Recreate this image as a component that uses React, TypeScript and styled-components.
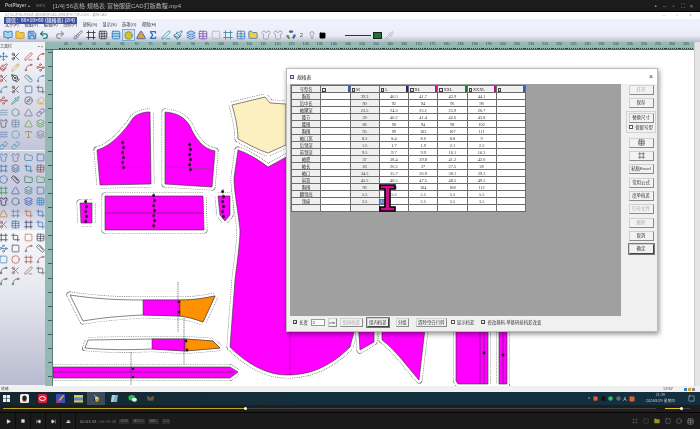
import styled, { createGlobalStyle } from "styled-components";
import {
  BookOpen, Brush, Circle, Compass, Crop, Eraser, Folder, Frame, Grid3x3, Hexagon, Layers, Lightbulb, Link,
  Move, Paintbrush, PenLine, PenTool, Pencil, Pipette, Play, Redo2, Ruler, Save, Scissors, Shirt, Sigma,
  SkipBack, SkipForward, Spline, Square, Table, Triangle, Type, Undo2, Waypoints, Waves,
} from "lucide-react";

const CJK = `"Liberation Sans", "Noto Sans CJK SC", sans-serif`;

const Global = createGlobalStyle`
  html, body { margin: 0; padding: 0; background: #111; }
  * { box-sizing: border-box; }
`;

const Root = styled.div`
  position: relative;
  width: 700px;
  height: 429px;
  overflow: hidden;
  display: flex;
  flex-direction: column;
  font-family: ${CJK};
  background: #1a1a1a;
  filter: blur(0.3px);
`;

/* player title */
const PlayerTitle = styled.div`
  height: 12px;
  background: #1b1b1b;
  border-bottom: 1px solid #000;
  color: #b5b5b5;
  display: flex;
  align-items: center;
  padding: 0 5px;
  font-size: 6px;
  white-space: nowrap;
`;
const PlayerName = styled.span`
  font-size: 4.6px;
  font-weight: 700;
  width: 31px;
`;
const PlayerType = styled.span`
  font-size: 4.4px;
  color: #777;
  width: 17px;
`;
const PlayerCtl = styled.div`
  margin-left: auto;
  display: flex;
  gap: 4px;
  align-items: center;
  font-size: 6px;
  color: #999;
  padding-right: 1px;
  & > span { width: 5px; text-align: center; line-height: 6px; }
`;

/* cad window */
const AppWindow = styled.div`
  height: 380px;
  background: #fff;
  display: flex;
  flex-direction: column;
  position: relative;
`;
const AppTitle = styled.div`
  height: 7px;
  padding: 0 5px;
  font-size: 3.6px;
  line-height: 6px;
  color: #aaa;
  display: flex;
  justify-content: space-between;
  white-space: nowrap;
`;
const WinBtns = styled.div`
  display: flex;
  gap: 11px;
  padding-right: 3px;
  font-size: 5px;
  color: #bbb;
`;
const Caption = styled.div`
  position: absolute;
  left: 4px;
  top: 5px;
  background: #3d4fa0;
  color: #cfd6fa;
  font-size: 5px;
  line-height: 6.5px;
  font-weight: 700;
  padding: 0 2px;
  white-space: nowrap;
`;
const MenuBar = styled.div`
  height: 9px;
  background: #eef0fb;
  display: flex;
  gap: 5.5px;
  padding: 3px 0 0 5px;
  font-size: 4.2px;
  line-height: 6px;
  color: #333;
`;
const ToolBar = styled.div`
  height: 14px;
  background: linear-gradient(#eef0fb 0%, #e8eaf6 55%, #b9bccb 100%);
  display: flex;
  align-items: center;
  padding-left: 2px;
`;
const Slot = styled.div<{ $w?: number; $active?: boolean }>`
  width: ${(p) => p.$w ?? 12.5}px;
  height: 12px;
  flex: none;
  display: flex;
  align-items: center;
  justify-content: center;
  font-size: 6px;
  color: #555;
  border: ${(p) => (p.$active ? "1px solid #7fa8d8" : "none")};
  background: ${(p) => (p.$active ? "#cfe2f8" : "transparent")};
`;
const LineSample = styled.div`
  width: 26px;
  height: 1px;
  background: #333;
  margin: 0 1px;
  flex: none;
`;
const GreenBox = styled.div`
  width: 9px;
  height: 7px;
  flex: none;
  background: #127a2a;
  border: 1px solid #222;
`;

const Workspace = styled.div`
  height: 344px;
  display: flex;
`;

/* tool panel */
const ToolPanel = styled.div`
  width: 45px;
  flex: none;
  padding-top: 1px;
  display: flex;
  flex-direction: column;
  background: #f2f3f8;
  overflow: hidden;
`;
const PanelHead = styled.div`
  height: 7px;
  font-size: 4px;
  line-height: 7px;
  color: #333;
  display: flex;
  justify-content: space-between;
  padding: 0 2px 0 0;
`;
const ToolSection = styled.div<{ $tone: string; $h: number }>`
  height: ${(p) => p.$h}px;
  background: ${(p) => p.$tone};
  padding-top: 1px;
  margin-bottom: 1px;
`;
const ToolGrid = styled.div`
  margin-left: -3px;
  display: grid;
  grid-template-columns: repeat(4, 12.5px);
  grid-auto-rows: 11.1px;
  justify-items: center;
  align-items: center;
  opacity: 0.85;
`;

/* rulers and canvas */
const Main = styled.div`
  flex: 1;
  min-width: 0;
  display: flex;
  flex-direction: column;
`;
const HRuler = styled.div`
  height: 8px;
  background: #93b9b2;
  display: flex;
  padding-left: 14px;
  overflow: hidden;
  border-bottom: 1px solid #666;
`;
const HMark = styled.div`
  width: 14.1px;
  flex: none;
  font-size: 3.6px;
  line-height: 5px;
  color: #274440;
  text-align: center;
  border-bottom: 1px dotted #27443f;
`;
const CanvasRow = styled.div`
  flex: 1;
  display: flex;
  min-height: 0;
`;
const VRuler = styled.div`
  width: 8px;
  flex: none;
  background: #93b9b2;
  border-right: 1px solid #5f7f7a;
  display: flex;
  flex-direction: column;
  overflow: hidden;
  padding-top: 2px;
`;
const VMark = styled.div`
  height: 14.1px;
  flex: none;
  border-top: 1px solid #3f5f5a;
  width: 5px;
  margin-left: 3px;
`;
const Canvas = styled.svg`
  display: block;
  flex: 1;
  width: 641px;
  height: 336px;
  background: #fff;
`;
const ScrollStrip = styled.div`
  width: 6px;
  flex: none;
  background: #e4e4e4;
  border-left: 1px solid #ccc;
`;
const StatusBar = styled.div`
  height: 6px;
  background: #f0f0f0;
  font-size: 3.8px;
  line-height: 6px;
  color: #444;
  display: flex;
  align-items: center;
  padding: 0 5px 0 1px;
`;
const StatusCount = styled.span`
  margin-left: auto;
  margin-right: 10px;
`;
const StatusDot = styled.i<{ $c: string }>`
  width: 3px;
  height: 3px;
  margin-left: 1px;
  background: ${(p) => p.$c};
`;

/* dialog */
const Dialog = styled.div`
  position: absolute;
  left: 286px;
  top: 68px;
  width: 372px;
  height: 264px;
  background: #f0f0f0;
  box-shadow: 1px 2px 5px rgba(0, 0, 0, 0.45);
  border: 1px solid #bbb;
  display: flex;
  flex-direction: column;
  font-size: 4.4px;
  color: #222;
`;
const DialogHead = styled.div`
  height: 15px;
  flex: none;
  background: #fff;
  display: flex;
  align-items: center;
  padding: 0 4px 0 3px;
  gap: 3px;
  font-size: 4.8px;
`;
const DialogIcon = styled.div`
  width: 4px;
  height: 4px;
  border: 1px solid #557;
  background: #cde;
`;
const DialogClose = styled.span`
  margin-left: auto;
  font-size: 7px;
  color: #333;
`;
const DialogBody = styled.div`
  display: flex;
  flex: 1;
  min-height: 0;
`;
const GridArea = styled.div`
  margin-left: 3px;
  width: 331px;
  height: 232px;
  flex: none;
  background: #a0a0a0;
  padding: 1px 0 0 1px;
`;
const SizeTable = styled.table`
  border-collapse: collapse;
  width: 235px;
  table-layout: fixed;
  background: #fff;
  font-family: "Liberation Serif", "Noto Sans CJK SC", serif;
  font-size: 4.3px;
  color: #333;
  td {
    border: 1px solid #6c6c6c;
    height: 7px;
    padding: 0;
    text-align: center;
    line-height: 5px;
    overflow: hidden;
    white-space: nowrap;
  }
`;
const NameCell = styled.td`
  background: #efefef;
`;
const BaseCell = styled.td`
  background: #efefef;
`;
const HeadCell = styled.td`
  background: #f0f0f0;
  position: relative;
  text-align: left !important;
  padding-left: 1px !important;
`;
const Swatch = styled.i<{ $c: string }>`
  position: absolute;
  right: 0;
  top: 0;
  bottom: 0;
  width: 2px;
  background: ${(p) => p.$c};
`;
const HeadBox = styled.b`
  display: inline-block;
  width: 3.5px;
  height: 3.5px;
  border: 0.6px solid #444;
  background: #fff;
  margin-right: 1px;
  vertical-align: -0.5px;
  font-size: 3px;
  line-height: 2.5px;
  font-weight: 400;
  &::after { content: "✓"; }
`;
const PickedCell = styled.td`
  text-align: left !important;
`;
const Picked = styled.span`
  background: #3a82d0;
  color: #fff;
  padding: 0 0.5px;
`;
const SideCol = styled.div`
  flex: 1;
  padding: 1px 6px 0 5px;
  display: flex;
  flex-direction: column;
  align-items: center;
  gap: 3.3px;
`;
const DlgButton = styled.div<{ $off?: boolean; $def?: boolean; $w?: number }>`
  width: ${(p) => p.$w ?? 25}px;
  height: 10px;
  flex: none;
  background: #f2f2f2;
  border: 1px solid #d0d0d0;
  border-right-color: ${(p) => (p.$def ? "#444" : "#8a8a8a")};
  border-bottom-color: ${(p) => (p.$def ? "#444" : "#8a8a8a")};
  outline: ${(p) => (p.$def ? "0.5px solid #777" : "none")};
  color: ${(p) => (p.$off ? "#aaa" : "#333")};
  font-size: 4.4px;
  line-height: 8px;
  text-align: center;
  white-space: nowrap;
  overflow: hidden;
`;
const GroupBox = styled.div`
  width: 30px;
  height: 22px;
  flex: none;
  border: 1px solid #d2d2d2;
  margin: -1px 0 2px;
  padding-top: 1px;
  display: flex;
  flex-direction: column;
  align-items: center;
  gap: 1px;
`;
const CheckRow = styled.label<{ $ml?: number }>`
  display: flex;
  align-items: center;
  gap: 2px;
  margin-left: ${(p) => p.$ml ?? 0}px;
  white-space: nowrap;
  color: #333;
  font-size: 4.4px;
`;
const Tick = styled.span<{ $on?: boolean }>`
  width: 4px;
  height: 4px;
  flex: none;
  background: #fff;
  border: 0.7px solid #555;
  font-size: 4px;
  line-height: 3px;
  text-align: center;
  color: #111;
  &::after { content: "${(p) => (p.$on ? "✓" : "")}"; }
`;
const FootRow = styled.div`
  height: 16px;
  flex: none;
  display: flex;
  align-items: center;
  padding: 0 0 2px 6px;
`;
const LenBox = styled.div`
  width: 14px;
  height: 7px;
  background: #fff;
  border: 0.7px solid #999;
  margin: 0 3px;
  font-size: 4px;
  line-height: 6px;
  padding-left: 1px;
`;
const FootBtn = styled(DlgButton)<{ $mr: number }>`
  height: 9px;
  line-height: 7px;
  margin-right: ${(p) => p.$mr}px;
`;

/* I beam pointer */
const Beam = styled.svg`
  position: absolute;
  left: 379px;
  top: 184px;
  width: 17px;
  height: 28px;
`;

/* taskbar and player */
const TaskBar = styled.div`
  height: 13px;
  background: linear-gradient(90deg, #15262f, #14303d 45%, #143040);
  display: flex;
  align-items: center;
`;
const TaskSlot = styled.div<{ $on?: boolean }>`
  width: 18px;
  height: 13px;
  flex: none;
  display: flex;
  align-items: center;
  justify-content: center;
  background: ${(p) => (p.$on ? "#3c4c58" : "transparent")};
`;
const StartSlot = styled(TaskSlot)`
  width: 12px;
  margin-right: 3px;
`;
const Tray = styled.div`
  margin-left: auto;
  display: flex;
  align-items: center;
  gap: 2.5px;
  padding-right: 5px;
  color: #ccd;
  font-size: 5px;
`;
const Clock = styled.div`
  width: 40px;
  margin: 0 5px 0 3px;
  text-align: center;
  font-size: 3.8px;
  line-height: 5.6px;
  color: #b8c4cc;
  white-space: nowrap;
`;
const SeekRow = styled.div`
  height: 8px;
  background: #1d1d1d;
  border-bottom: 1px solid #050505;
  display: flex;
  align-items: center;
  padding: 0 5px 0 3px;
`;
const SeekTrack = styled.div`
  width: 653px;
  height: 1px;
  background: #444;
  position: relative;
`;
const SeekFill = styled.div`
  height: 1px;
  background: #c0a820;
`;
const Knob = styled.div<{ $left: number }>`
  position: absolute;
  left: ${(p) => p.$left}px;
  top: -1px;
  width: 3px;
  height: 3px;
  background: #fff;
  border-radius: 50%;
`;
const VolTrack = styled.div`
  margin-left: 9px;
  width: 25px;
  height: 1px;
  background: #444;
  position: relative;
`;
const VolFill = styled.div`
  width: 16px;
  height: 1px;
  background: #d8c030;
`;
const Controls = styled.div`
  flex: 1;
  background: #1a1a1a;
  display: flex;
  align-items: center;
  color: #ddd;
  padding-left: 1px;
`;
const PlayBtn = styled.div`
  width: 15px;
  height: 16px;
  border-right: 1px solid #0c0c0c;
  flex: none;
  display: flex;
  align-items: center;
  justify-content: center;
  font-size: 5px;
`;
const TimeText = styled.span`
  font-size: 4.2px;
  color: #999;
  margin-left: 4px;
  white-space: nowrap;
  & > em { color: #666; font-style: normal; }
`;
const Chip = styled.span`
  background: #2c2c2c;
  color: #777;
  font-size: 3.8px;
  line-height: 5px;
  padding: 0 1.5px;
  margin-left: 3px;
`;
const RightCtl = styled.div`
  margin-left: auto;
  display: flex;
  gap: 5px;
  padding-right: 6px;
  align-items: center;
`;

type Ico = typeof Ruler;

const sec1: [Ico, string][] = [
  [Move, "#2a6fb0"], [Scissors, "#333"], [PenLine, "#c0392b"], [Spline, "#b03030"],
  [Paintbrush, "#b02020"], [Pencil, "#c8a020"], [Spline, "#a04040"], [Waypoints, "#b04020"],
  [Scissors, "#c03030"], [PenTool, "#222"], [Ruler, "#4a7a90"], [Spline, "#3a7fa8"],
  [Spline, "#3a8a98"], [Scissors, "#444"], [Square, "#3a6fb0"], [Crop, "#556"],
  [Waypoints, "#c04040"], [Pipette, "#3a7a7a"], [Compass, "#556"], [Eraser, "#d0a020"],
  [Waves, "#4a8aa8"], [Hexagon, "#5a7a98"], [Triangle, "#668"], [Link, "#557"],
  [Shirt, "#557"], [Table, "#6a8aa8"], [Triangle, "#6a9a50"], [Layers, "#5a9a50"],
  [Waves, "#3a6fb0"], [Circle, "#5a9ab0"], [Type, "#a08040"], [Layers, "#7a7a9a"],
  [Link, "#3a7fb8"], [Link, "#4a90b8"],
];
const sec2: [Ico, string][] = [
  [Shirt, "#3a7fb8"], [Shirt, "#5a7a98"], [Folder, "#3a7fb8"], [Square, "#2a6fb0"],
  [Frame, "#2a6fb0"], [Layers, "#335f90"], [Crop, "#2a6f9f"], [Table, "#805050"],
  [Circle, "#3a6fb0"], [Ruler, "#223"], [Folder, "#208050"], [Folder, "#40905a"],
  [Frame, "#2a9050"], [Triangle, "#3a5f90"], [Layers, "#2a7f90"], [Square, "#3a6fb0"],
  [Shirt, "#224"], [Hexagon, "#3a5f90"], [Layers, "#2050a0"], [Grid3x3, "#3a7fc0"],
  [Triangle, "#c07020"], [Frame, "#5a7a98"], [Crop, "#c06030"], [Crop, "#2a6fb0"],
  [Scissors, "#905050"], [Table, "#2a6fb0"], [Frame, "#335"], [Crop, "#3a6fb0"],
];
const sec3: [Ico, string][] = [
  [Frame, "#334"], [Crop, "#334"], [Square, "#c07050"], [Table, "#445"],
  [Waypoints, "#3a6fb0"], [Square, "#445"], [Spline, "#905050"], [Ruler, "#445"],
  [Square, "#3a7fb8"], [Circle, "#c05040"], [Frame, "#a05040"], [Spline, "#a05060"],
  [Spline, "#445"], [Scissors, "#805060"], [PenLine, "#a06050"], [Crop, "#556"],
  [Spline, "#556"], [Spline, "#556"],
];

const tb: [Ico, string, string?][] = [
  [Frame, "#333"], [Grid3x3, "#444"], [Table, "#2a78c0", "#bcdcf5"], [Circle, "#7a8a20", "#d0c040"],
  [Triangle, "#2a5fb0", "#e0a040"], [Sigma, "#1f6fc8"], [PenLine, "#3a9aa8"], [Paintbrush, "#2a6f90"],
  [Layers, "#3a78c0", "#a8d0f0"], [Table, "#8050b0"], [Square, "#b0b8c0"], [Frame, "#3a8a98"],
  [Table, "#3a7fb8"], [Folder, "#3a78b0", "#f0d040"], [Shirt, "#a0a4ac"], [Shirt, "#a0a4ac"],
];

const sizes = [
  ["胸宽", "39.3", "40.5", "41.7", "42.9", "44.1"],
  ["后中长", "90", "92", "94", "96", "98"],
  ["袖窿深", "23.5", "24.3", "25.1", "25.9", "26.7"],
  ["腰节", "39", "40.2", "41.4", "42.6", "43.8"],
  ["腰围", "86", "90", "94", "98", "102"],
  ["胸围", "95", "99", "103", "107", "111"],
  ["袖口宽", "8.2", "8.4", "8.6", "8.8", "9"],
  ["后领深", "1.5", "1.7", "1.9", "2.1", "2.3"],
  ["前领深", "9.5", "9.7", "9.9", "10.1", "10.3"],
  ["袖肥", "37", "38.4", "39.8", "41.2", "42.6"],
  ["袖长", "26", "26.5", "27", "27.5", "28"],
  ["袖口", "34.5", "35.7", "36.9", "38.1", "39.3"],
  ["肩宽", "45.5", "46.5", "47.5", "48.5", "49.5"],
  ["胸围", "96", "100", "104", "108", "112"],
  ["翻领高", "5.5", "5.5", "5.5", "5.5", "5.5"],
  ["领座", "3.5", "3.5", "3.5", "3.5", "3.5"],
];

// dashed wide stroke, then a white one on top: only the outer ticks stay, as a seam allowance
function Piece({ d, fill = "#ff00ff", gap = 7 }: { d: string; fill?: string; gap?: number }) {
  return (
    <g strokeLinejoin="round">
      <path d={d} fill="none" stroke="#555" strokeWidth={gap} strokeDasharray="0.8 1" />
      <path d={d} fill="#fff" stroke="#fff" strokeWidth={gap - 1.2} />
      <path d={d} fill={fill} stroke="#333" strokeWidth={0.6} />
    </g>
  );
}

function Notches({ x, y, n, step = 5 }: { x: number; y: number; n: number; step?: number }) {
  return (
    <g>
      <line x1={x} y1={y} x2={x} y2={y + n * step} stroke="#222" strokeWidth={0.6} strokeDasharray="1 0.8" />
      {Array.from({ length: n }, (_, i) => (
        <circle key={i} cx={x + (i % 2 ? 0.6 : -0.4)} cy={y + step / 2 + i * step} r={1.5} fill="#301030" />
      ))}
    </g>
  );
}

function Patterns() {
  return (
    <Canvas viewBox="53 50 641 336">
      <Piece d="M97,150 C112,146 125,130 133,118 C138,113 145,112 150,112 L151,184 L100,185 Z" />
      <line x1="99" y1="168" x2="150" y2="167" stroke="#555" strokeWidth="0.5" strokeDasharray="1 1" />
      <Notches x={123} y={140} n={6} />
      <Piece d="M165,112 C176,113 184,116 190,126 C195,138 203,149 215,151 L212,187 L165,184 Z" />
      <line x1="166" y1="167" x2="213" y2="169" stroke="#555" strokeWidth="0.5" strokeDasharray="1 1" />
      <Notches x={190} y={142} n={6} />
      <Piece d="M105,196 L203,196 L204,230 L105,230 Z" />
      <line x1="105" y1="213" x2="204" y2="213" stroke="#333" strokeWidth="0.6" />
      <Notches x={154} y={193} n={7} />
      <Piece d="M80,203 L92,203 L92,223 L81,223 Z" />
      <Notches x={86} y={199} n={5} />
      <Piece d="M218,196 L230,196 L230,215 L225,221 L220,215 Z" />
      <Notches x={223} y={189} n={6} />
      <Piece d="M232,105 L265,97 L270,103 L286,104 L286,145 L268,153 C258,150 246,143 238,139 C238,128 235,115 232,105 Z" fill="#fdf0c0" />
      <Piece d="M238,150 C250,154 260,161 268,167 L290,155 L354,155 L354,332 L350,347 C332,365 312,375 287,375 C265,375 245,362 230,347 L235,280 C237,262 240,244 240,230 C238,210 234,192 234,178 Z" />
      <line x1="290" y1="330" x2="290" y2="375" stroke="#a000a0" strokeWidth="0.5" />
      <Piece d="M358,320 L374,320 L374,342 L360,350 Z" />
      <Piece d="M382,320 L426,320 L419,380 C408,368 396,350 382,340 Z" />
      <Piece d="M456,300 L488,300 L488,384 L458,384 L456,381 Z" gap={6} />
      <line x1="480" y1="330" x2="480" y2="384" stroke="#333" strokeWidth="0.5" />
      <line x1="484" y1="330" x2="484" y2="384" stroke="#333" strokeWidth="0.5" />
      <circle cx="484" cy="353" r="1.4" fill="#111" />
      <Piece d="M499,300 L507,300 L507,384 L499,384 Z" gap={6} />
      <line x1="503" y1="330" x2="503" y2="384" stroke="#333" strokeWidth="0.5" />
      <circle cx="503" cy="355" r="1.4" fill="#111" />

      <Piece d="M70,295 C95,299 120,300 143,300 L180,300 C195,300 205,298 215,296 L203,322 C195,319 188,317 180,316 L143,315 C120,316 100,318 83,321 Z" fill="#fff" />
      <path d="M143,300 L180,300 L180,316 L143,315 Z" fill="#ff00ff" stroke="#333" strokeWidth="0.5" />
      <path d="M180,300 C195,300 205,298 215,296 L203,322 C195,319 188,317 180,316 Z" fill="#ff9000" stroke="#333" strokeWidth="0.5" />
      <line x1="178" y1="282" x2="178" y2="332" stroke="#333" strokeWidth="0.7" strokeDasharray="1 0.8" />
      <circle cx="179" cy="302" r="1.3" fill="#301030" />
      <circle cx="179" cy="312" r="1.3" fill="#301030" />
      <Piece d="M88,340 L152,339 L185,339 L213,341 L220,348 L185,351 L152,349 C130,350 105,350 85,348 Z" fill="#fff" gap={6} />
      <path d="M152,339 L185,339 L185,351 L152,349 Z" fill="#ff00ff" stroke="#333" strokeWidth="0.5" />
      <path d="M185,339 L213,341 L220,348 L185,351 Z" fill="#ff9000" stroke="#333" strokeWidth="0.5" />
      <line x1="184" y1="318" x2="184" y2="370" stroke="#333" strokeWidth="0.7" strokeDasharray="1 0.8" />
      <circle cx="186" cy="341" r="1.4" fill="#222" />
      <circle cx="187" cy="350" r="1.4" fill="#222" />
      <Piece d="M53,367 L230,367 L238,372 L230,378 L53,378 Z" gap={6} />
      <line x1="53" y1="372" x2="234" y2="372" stroke="#333" strokeWidth="0.6" />
      <line x1="131" y1="352" x2="131" y2="385" stroke="#333" strokeWidth="0.7" strokeDasharray="1 0.8" />
      <circle cx="133" cy="369" r="1.3" fill="#222" />
      <circle cx="133" cy="377" r="1.3" fill="#222" />
    </Canvas>
  );
}

function Tools({ list }: { list: [Ico, string][] }) {
  return (
    <ToolGrid>
      {list.map(([I, c], i) => (
        <I key={i} size={9} color={c} strokeWidth={2.2} />
      ))}
    </ToolGrid>
  );
}

function Windows() {
  return (
    <svg width="7" height="7" viewBox="0 0 7 7">
      <path d="M0 0h3.2v3.2H0zM3.8 0H7v3.2H3.8zM0 3.8h3.2V7H0zM3.8 3.8H7V7H3.8z" fill="#e8f0f8" />
    </svg>
  );
}

function TaskIcon({ n }: { n: number }) {
  const shapes = [
    <g key="qq"><rect width="9" height="9" rx="1.5" fill="#eee" /><ellipse cx="4.5" cy="4.2" rx="2.2" ry="2.8" fill="#222" /><path d="M2.5 7h4" stroke="#d22" /></g>,
    <g key="red"><rect width="9" height="9" rx="1.5" fill="#d8203a" /><ellipse cx="4.5" cy="4.5" rx="3" ry="2" fill="none" stroke="#fff" /></g>,
    <g key="paint"><rect width="9" height="9" fill="#3a50c0" /><path d="M1 8 7 1l1 1-5 6z" fill="#f0c020" /><path d="M0 9 3 5l1 3z" fill="#d03030" /></g>,
    <g key="dir"><rect y="1" width="9" height="7.5" fill="#e8c050" /><rect y="3.5" width="9" height="3" fill="#4a90c8" /></g>,
    <g key="cad"><path d="M2 1 7 4 5 8 3 5z" fill="#d8d8e0" /><circle cx="5" cy="6" r="1.8" fill="#d0a020" /><path d="M3 2 2 7" stroke="#224" /></g>,
    <g key="box"><path d="M2 1h6L7 8H1z" fill="#7fb0c8" /><path d="M2 1h3L3 8H1z" fill="#a8d0e0" /></g>,
    <g key="wx"><ellipse cx="3.8" cy="3.8" rx="3.4" ry="2.8" fill="#20c050" /><ellipse cx="6.4" cy="5.8" rx="2.5" ry="2" fill="#e8f0e8" /></g>,
    <g key="mask"><path d="M1 2c2 0 3 1 3.5 2C5 3 6 2 8 2c0 4-1 5-2.5 5L4.5 6l-1 1C2 7 1 6 1 2z" fill="#6a5a40" /></g>,
  ];
  return <svg width="9" height="9" viewBox="0 0 9 9">{shapes[n]}</svg>;
}

export default function App() {
  const rulerMarks = Array.from({ length: 45 }, (_, i) => 45 + i * 5);
  const swatches = ["#2060d0", "", "#202080", "#d01080", "#108030", "#c01080", "#2060d0"];
  const heads = ["", "M", "L", "XL", "XXL", "XXXL", ""];

  return (
    <Root>
      <Global />
      <PlayerTitle>
        <PlayerName>PotPlayer ⌄</PlayerName>
        <PlayerType>MP4</PlayerType>
        <span>[1/4] 56表格·规格表·富怡服装CAD打版教程.mp4</span>
        <PlayerCtl>
          <span>▪</span><span>–</span><span>▫</span><span>⛶</span><span>×</span>
        </PlayerCtl>
      </PlayerTitle>

      <AppWindow>
        <AppTitle>
          <span>[x] 56-表格-规格表-富怡服装CAD-规格表尺寸表-DGS - 富怡CAD</span>
          <WinBtns><span>–</span><span>▫</span><span>×</span></WinBtns>
        </AppTitle>
        <Caption>微信：60×10×60 (规格表) (2/4)</Caption>
        <MenuBar>
          <span>文件(F)</span><span>视图(V)</span><span>编辑(E)</span><span>纸样(P)</span>
          <span>放码(G)</span><span>显示(S)</span><span>选项(O)</span><span>帮助(H)</span>
        </MenuBar>
        <ToolBar>
          <Slot $w={12}><BookOpen size={10} color="#2a78c0" fill="#a8d0f0" /></Slot>
          <Slot $w={12}><Folder size={10} color="#c89020" fill="#f0c850" /></Slot>
          <Slot $w={12}><Save size={10} color="#2a68b0" fill="#a8c8e8" /></Slot>
          <Slot $w={12}><Undo2 size={10} color="#1f7f78" strokeWidth={3} /></Slot>
          <Slot $w={20}><Redo2 size={10} color="#999" strokeWidth={3} /></Slot>
          <Slot $w={2} />
          <Slot><Brush size={10} color="#5a7090" /></Slot>
          {tb.map(([I, c, f], i) => (
            <Slot key={i} $active={i === 3}>
              <I size={i === 3 ? 9 : 10} color={c} fill={f ?? "none"} strokeWidth={i === 5 ? 3 : 2} />
            </Slot>
          ))}
          <Slot>
            <svg width="10" height="10" viewBox="0 0 10 10">
              <circle cx="5" cy="5" r="3.6" fill="none" stroke="#e04040" strokeWidth="2" strokeDasharray="3.7 3.7" />
              <circle cx="5" cy="5" r="3.6" fill="none" stroke="#3060e0" strokeWidth="2" strokeDasharray="3.7 11" />
              <circle cx="5" cy="5" r="3.6" fill="none" stroke="#30b040" strokeWidth="2" strokeDasharray="3.7 11" strokeDashoffset="8" />
            </svg>
          </Slot>
          <Slot $w={9}>2</Slot>
          <Slot $w={12}><Lightbulb size={8} color="#777" /></Slot>
          <Slot $w={8}><Square size={7} color="#000" fill="#000" /></Slot>
          <Slot $w={18} />
          <LineSample />
          <Slot $w={1} />
          <GreenBox />
          <Slot $w={14}><Pipette size={9} color="#b0b4c0" /></Slot>
        </ToolBar>

        <Workspace>
          <ToolPanel>
            <PanelHead><span>工具栏</span><span>▪ ×</span></PanelHead>
            <ToolSection $h={100} $tone="linear-gradient(#f6f7fb, #c2c5d8)"><Tools list={sec1} /></ToolSection>
            <ToolSection $h={79} $tone="linear-gradient(#cfd1e2, #c6c9dc 70%, #e8e9f2)"><Tools list={sec2} /></ToolSection>
            <ToolSection $h={156} $tone="linear-gradient(#f8f8fb, #e6e8f0 40%, #b8bbcf)"><Tools list={sec3} /></ToolSection>
          </ToolPanel>
          <Main>
            <HRuler>
              {rulerMarks.map((m) => <HMark key={m}>{m}</HMark>)}
            </HRuler>
            <CanvasRow>
              <VRuler>
                {Array.from({ length: 24 }, (_, i) => <VMark key={i} />)}
              </VRuler>
              <Patterns />
            </CanvasRow>
          </Main>
          <ScrollStrip />
        </Workspace>
        <StatusBar>
          <span>就绪</span>
          <StatusCount>57/57</StatusCount>
          <StatusDot $c="#3a7fc0" /><StatusDot $c="#d0a030" /><StatusDot $c="#888" />
        </StatusBar>
      </AppWindow>

      <TaskBar>
        <StartSlot><Windows /></StartSlot>
        {[0, 1, 2, 3].map((n) => <TaskSlot key={n}><TaskIcon n={n} /></TaskSlot>)}
        <TaskSlot $on><TaskIcon n={4} /></TaskSlot>
        {[5, 6, 7].map((n) => <TaskSlot key={n}><TaskIcon n={n} /></TaskSlot>)}
        <Tray>
          <span>⌃</span>
          <Square size={5} color="#d86030" fill="#d86030" />
          <Square size={5} color="#111" fill="#111" />
          <Circle size={5} color="#30c060" fill="#30c060" />
          <Circle size={5} color="#667" fill="#667" />
          <span>A</span>
          <Square size={6} color="#e06030" fill="#e06030" />
          <Clock>21:39<br />2024/8/29 星期四</Clock>
          <Square size={7} color="#b8c8d0" />
        </Tray>
      </TaskBar>
      <SeekRow>
        <SeekTrack>
          <SeekFill style={{ width: 242 }} />
          <Knob $left={241} />
        </SeekTrack>
        <VolTrack>
          <VolFill />
          <Knob $left={15} />
        </VolTrack>
      </SeekRow>
      <Controls>
        <PlayBtn><Play size={5} color="#ddd" fill="#ddd" /></PlayBtn>
        <PlayBtn><Square size={4} color="#ddd" fill="#ddd" /></PlayBtn>
        <PlayBtn><SkipBack size={5} color="#ddd" fill="#ddd" /></PlayBtn>
        <PlayBtn><SkipForward size={5} color="#ddd" fill="#ddd" /></PlayBtn>
        <PlayBtn>⏏</PlayBtn>
        <TimeText>00:03:33 <em>/ 00:05:38</em></TimeText>
        <Chip>S/W</Chip><Chip>AVC1</Chip><Chip>AAC</Chip><Chip>2.0</Chip>
        <RightCtl>
          <Frame size={6} color="#555" />
          <Square size={6} color="#555" />
          <Folder size={6} color="#a09020" fill="#a09020" />
          <Square size={6} color="#888" />
          <Circle size={6} color="#888" />
          <Table size={7} color="#888" />
        </RightCtl>
      </Controls>

      <Dialog>
        <DialogHead>
          <DialogIcon />
          <span>规格表</span>
          <DialogClose>×</DialogClose>
        </DialogHead>
        <DialogBody>
          <GridArea>
            <SizeTable>
              <tbody>
                <tr>
                  <NameCell>号型名</NameCell>
                  {heads.map((h, i) => (
                    <HeadCell key={i}>
                      <HeadBox />{h}
                      {swatches[i] && <Swatch $c={swatches[i]} />}
                    </HeadCell>
                  ))}
                </tr>
                {sizes.map((row, r) => (
                  <tr key={r}>
                    <NameCell>{row[0]}</NameCell>
                    <td />
                    <BaseCell>{row[1]}</BaseCell>
                    {row.slice(2).map((v, c) =>
                      r === 15 && c === 0 ? (
                        <PickedCell key={c}><Picked>{v}</Picked></PickedCell>
                      ) : (
                        <td key={c}>{v}</td>
                      )
                    )}
                    <td />
                  </tr>
                ))}
                <tr>
                  <NameCell />
                  <td />
                  <BaseCell />
                  <td /><td /><td /><td /><td />
                </tr>
              </tbody>
            </SizeTable>
          </GridArea>
          <SideCol>
            <DlgButton $off>打开</DlgButton>
            <DlgButton>保存</DlgButton>
            <GroupBox>
              <DlgButton>替换尺寸</DlgButton>
              <CheckRow><Tick />保留号型</CheckRow>
            </GroupBox>
            <DlgButton><Table size={7} color="#444" /></DlgButton>
            <DlgButton><Frame size={7} color="#444" /></DlgButton>
            <DlgButton>粘贴Excel</DlgButton>
            <DlgButton>常用公式</DlgButton>
            <DlgButton>度单档差</DlgButton>
            <DlgButton $off>归号文件</DlgButton>
            <DlgButton $off>删除</DlgButton>
            <DlgButton>取消</DlgButton>
            <DlgButton $def>确定</DlgButton>
          </SideCol>
        </DialogBody>
        <FootRow>
          <CheckRow><Tick $on />长度</CheckRow>
          <LenBox>2</LenBox>
          <FootBtn $w={9} $mr={3}>cm</FootBtn>
          <FootBtn $w={23} $mr={4} $off>组间档差</FootBtn>
          <FootBtn $w={22} $mr={7} $def>组内档差</FootBtn>
          <FootBtn $w={13} $mr={7}>分组</FootBtn>
          <FootBtn $w={31} $mr={4}>清除空白行列</FootBtn>
          <CheckRow><Tick />显示档差</CheckRow>
          <CheckRow $ml={7}><Tick $on />修改基码,单基码技档差改变</CheckRow>
        </FootRow>
      </Dialog>

      <Beam viewBox="0 0 17 28">
        <path d="M1 1h15v4h-5v18h5v4H1v-4h5V5H1z" fill="#d0108a" stroke="#000" strokeWidth="1.6" />
      </Beam>
    </Root>
  );
}
